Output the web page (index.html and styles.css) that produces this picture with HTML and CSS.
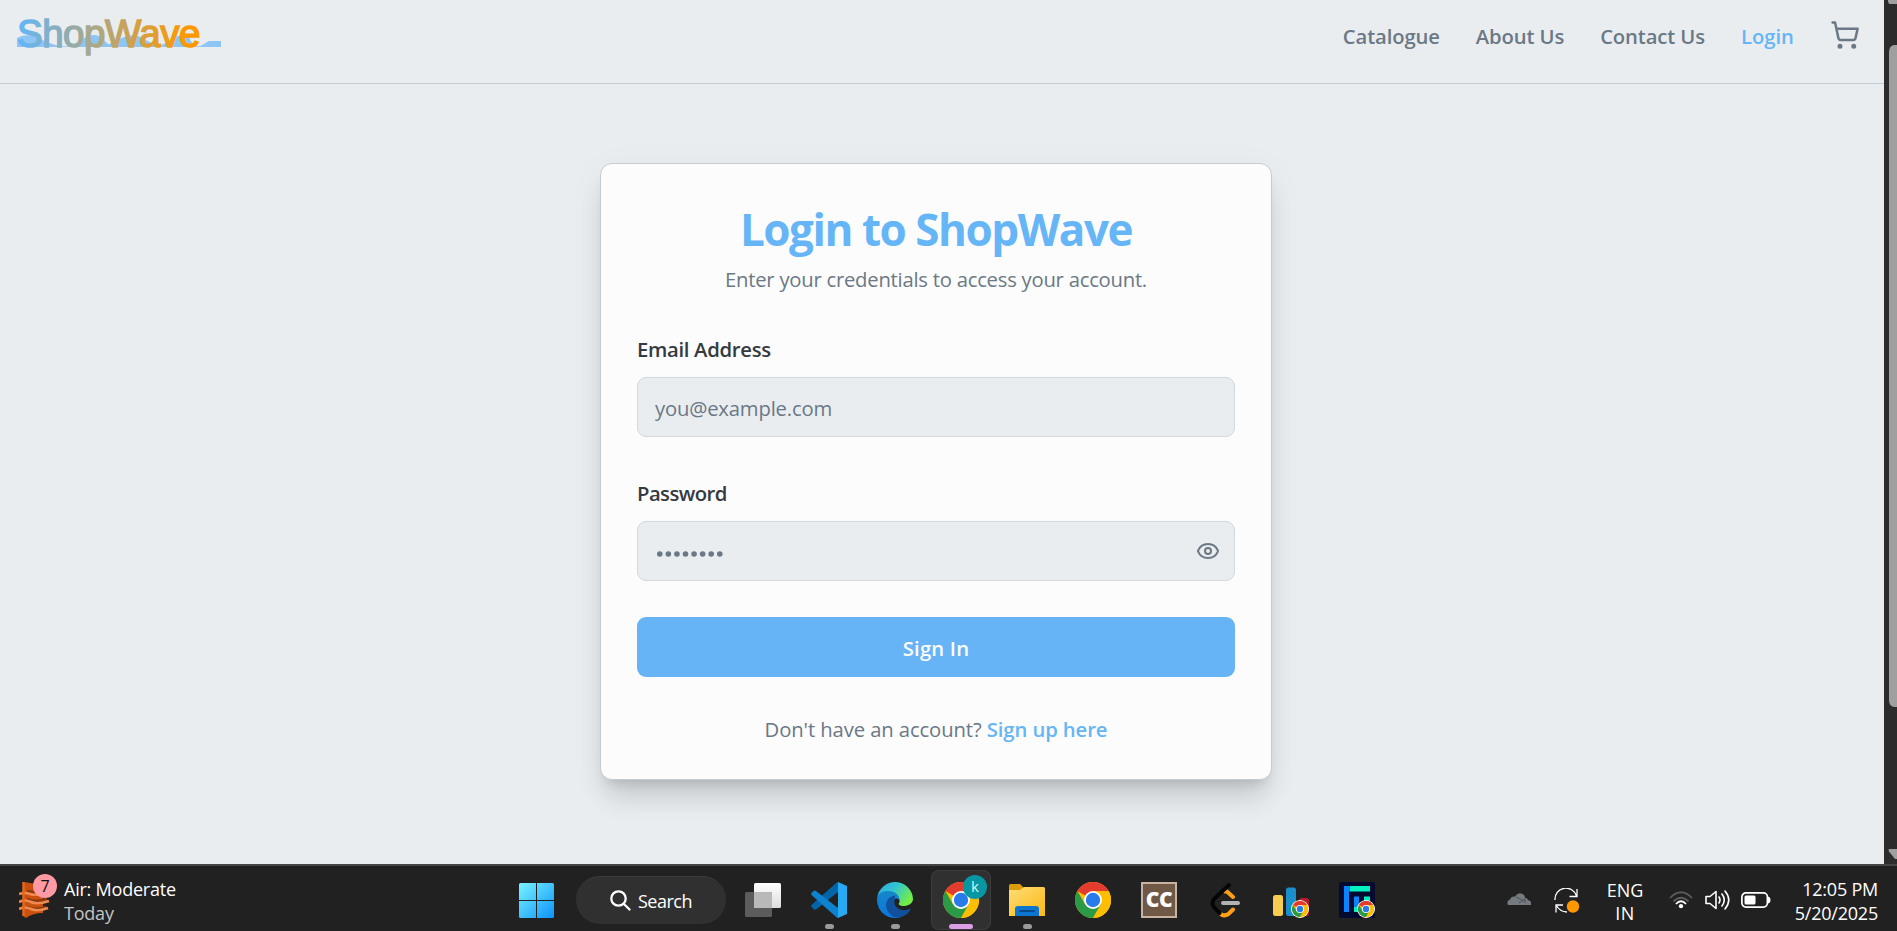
FILE: index.html
```html
<!DOCTYPE html>
<html lang="en">
<head>
<meta charset="utf-8">
<title>ShopWave - Login</title>
<link rel="stylesheet" href="styles.css">
</head>
<body>
<svg width="0" height="0" class="defs" aria-hidden="true">
  <defs>
    <linearGradient id="winG" x1="0" y1="0" x2="1" y2="1"><stop offset="0" stop-color="#7af3ff"/><stop offset="1" stop-color="#0c93fb"/></linearGradient>
    <symbol id="chrome" viewBox="0 0 48 48">
      <circle cx="24" cy="24" r="24" fill="#fdbd00"/>
      <path d="M24 24 3.2 12A24 24 0 0 1 44.8 12H24z" fill="#e33b2e"/>
      <path d="M3.2 12A24 24 0 0 0 24 48l10.4-18L24 24 13.6 30z" fill="#2a9a47"/>
      <path d="M44.8 12A24 24 0 0 1 24 48l10.4-18L36 20 24 12z" fill="#fdbd00"/>
      <circle cx="24" cy="24" r="12" fill="#fff"/>
      <circle cx="24" cy="24" r="9.6" fill="#2a7bea"/>
    </symbol>
  </defs>
</svg>

<div class="viewport">
  <div class="page">
    <header class="header">
      <svg class="logo" width="210" height="60" viewBox="0 0 210 60">
        <defs><linearGradient id="logoG" gradientUnits="userSpaceOnUse" x1="4" y1="0" x2="170" y2="0"><stop offset="0" stop-color="#64b5f6"/><stop offset="1" stop-color="#ff9800"/></linearGradient></defs>
        <path d="M2 47V38C10 34 18 35 24 38Q31 43 46 46.300H60C66 44 68 35 78 35S88 41 94 44.500Q98 46 103 46.300H90C100 42 108 36 116 35.500C128 35 130 42 145 46.300H143C152 44 158 36 168 35C178 35 172 42 182 46.300H185L194 41H206V47Z" fill="#8dc5f5"/>
        <text x="2" y="47.200" class="logo-text">ShopWave</text>
      </svg>
      <nav class="nav">
        <a>Catalogue</a><a>About Us</a><a>Contact Us</a><a class="active">Login</a>
        <svg class="cart" width="30" height="30" viewBox="0 0 24 24"><circle cx="8" cy="21" r="1"/><circle cx="19" cy="21" r="1"/><path d="M2.050 2.050h2l2.660 12.420a2 2 0 0 0 2 1.580h9.780a2 2 0 0 0 1.950-1.570l1.650-7.430H5.120"/></svg>
      </nav>
    </header>
    <main class="main">
      <form class="card">
        <h1 class="title">Login to ShopWave</h1>
        <p class="subtitle">Enter your credentials to access your account.</p>
        <label class="label">Email Address</label>
        <div class="field"><span class="placeholder">you@example.com</span></div>
        <label class="label label-pw">Password</label>
        <div class="field">
          <svg class="dots" width="69" height="8" viewBox="0 0 69 8"><path d="M4.800 4H67" /></svg>
          <svg class="eye" width="24" height="24" viewBox="0 0 24 24"><path d="M2.062 12.348a1 1 0 0 1 0-.696 10.750 10.750 0 0 1 19.876 0 1 1 0 0 1 0 .696 10.750 10.750 0 0 1-19.876 0"/><circle cx="12" cy="12" r="3"/></svg>
        </div>
        <button class="submit" type="button">Sign In</button>
        <p class="signup"><span>Don't have an account?</span> <a>Sign up here</a></p>
      </form>
    </main>
  </div>
  <div class="scrollbar">
    <svg width="13" height="864" viewBox="0 0 13 864"><path d="M4 0H13V4H6Q4 4 4 0Z" fill="#9f9f9f"/><path d="M13 45H10Q5 46 5 52V700Q5 706 10 707H13Z" fill="#9f9f9f"/><path d="M5 849H13V859H11L5 851.500Q4 850 5 849Z" fill="#9f9f9f"/></svg>
  </div>
</div>

<footer class="taskbar">
  <div class="weather">
    <div class="weather-icon">
      <svg width="36" height="40" viewBox="0 0 36 40"><path d="M5 3Q14 5 24 5V34Q14 34 7 39L4 37Z" fill="#c9500f"/><path d="M8 12Q17 15 28 12M8 20Q17 24 28 20M8 28Q17 32 27 28" stroke="#8c3a0c" stroke-width="3" fill="none"/><path d="M0 15Q6 13 11 15T29 14M0 23Q6 20 12 23T30 22M0 30Q6 27 12 30T29 29" stroke="#f08a50" stroke-width="2.600" fill="none"/><path d="M4.500 3V37" stroke="#e0671c" stroke-width="2.500"/></svg>
      <span class="count">7</span>
    </div>
    <div class="weather-text"><span>Air: Moderate</span><span class="dim">Today</span></div>
  </div>

  <div class="apps">
    <svg class="win" width="35" height="35" viewBox="0 0 35 35"><path d="M1.500 0H17V17H0V1.500Q0 0 1.500 0ZM18 0H33.500Q35 0 35 1.500V17H18ZM0 18H17V35H1.500Q0 35 0 33.500ZM18 18H35V33.500Q35 35 33.500 35H18Z" fill="url(#winG)"/></svg>
    <div class="search"><svg width="21" height="21" viewBox="0 0 21 21"><circle cx="8.500" cy="8.500" r="7.200"/><path d="M13.700 13.700 19.500 19.500"/></svg><span>Search</span></div>
    <svg class="tasks" width="36" height="34" viewBox="0 0 36 34"><defs><linearGradient id="tv" x1="0" y1="0" x2="0" y2="1"><stop offset="0" stop-color="#fff"/><stop offset="1" stop-color="#dcdcdc"/></linearGradient></defs><rect x="9" width="27" height="25" rx="1.500" fill="url(#tv)"/><rect y="9" width="27" height="25" rx="1.500" fill="#5c5c5c"/><path d="M9 9H25.500Q27 9 27 10.500V25H9Z" fill="#b9b9b9"/></svg>
    <div class="app">
      <svg width="36" height="36" viewBox="0 0 36 36"><path d="M27 0V10L5 27.500Q3.500 28 2.500 27L.5 25Q-.5 24 .8 22.800L26 .3Z" fill="#0065a9"/><path d="M27 36V26L5 9Q3.500 8 2.500 9L.5 11Q-.3 12 .8 13.200L26 35.700Z" fill="#0d83cf"/><path d="M27 0 36 4V32L27 36Z" fill="#27a9f3"/></svg>
      <b class="run"></b>
    </div>
    <div class="app">
      <svg width="36" height="36" viewBox="0 0 36 36"><defs><linearGradient id="ed1" x1="0" y1="0" x2="1" y2=".5"><stop offset="0" stop-color="#2aa5e5"/><stop offset=".5" stop-color="#34c6d2"/><stop offset="1" stop-color="#72ed45"/></linearGradient><linearGradient id="ed2" x1="0" y1="0" x2="0" y2="1"><stop offset="0" stop-color="#1588c9"/><stop offset="1" stop-color="#0b75dd"/></linearGradient></defs><path d="M.3 15A18 18 0 0 1 36 17C36 24 24 26 21.500 22C24 19 22 15 18 13Q7 7 .3 15Z" fill="url(#ed1)"/><path d="M0 18C0 11 6 8.500 12 9C18 9 22.500 13 22.500 18C19 14 15 18 16 24Q18 34 24 35A18 18 0 0 1 0 18Z" fill="url(#ed2)"/><path d="M18 13.500C7 15 6 28 16 34.500C23 37.500 31 33 33.500 27.500Q34 26 32.500 27C24 31 15 25 18 17Z" fill="#11509c"/></svg>
      <b class="run"></b>
    </div>
    <div class="app app-active">
      <svg width="36" height="36"><use href="#chrome"/></svg>
      <span class="profile">k</span>
      <b class="run run-active"></b>
    </div>
    <div class="app">
      <svg width="36" height="36" viewBox="0 0 36 36"><defs><linearGradient id="fo" x1="0" y1="0" x2="1" y2="1"><stop offset="0" stop-color="#ffdc78"/><stop offset="1" stop-color="#fcb912"/></linearGradient></defs><path d="M0 3.500Q0 2 1.500 2H11L15 6H24V10H0Z" fill="#dc9b08"/><path d="M0 8H11L15 5H34.500Q36 5 36 6.500V34H0Z" fill="url(#fo)"/><path d="M6 34V27Q6 24 9 24H27Q30 24 30 27V34Z" fill="#0c75cf"/><path d="M11 29H25" stroke="#08488c" stroke-width="2" stroke-linecap="round"/></svg>
      <b class="run"></b>
    </div>
    <div class="app"><svg width="36" height="36"><use href="#chrome"/></svg></div>
    <div class="app"><div class="cc">CC</div></div>
    <div class="app">
      <svg width="36" height="36" viewBox="0 0 36 36"><g fill="none" stroke-width="4" stroke-linecap="round" transform="translate(1.500 0)"><path d="M16.500 9.500Q18 9 19 10L24.500 15M24.500 27.500 20 32Q16 34.500 13 32.500" stroke="#ffa116"/><path d="M20.500 3 5.500 17Q2.500 21 5.500 25L11 31" stroke="#050505"/><path d="M14.500 21H29.500" stroke="#b3b3b3"/></g></svg>
    </div>
    <div class="app">
      <svg width="36" height="36" viewBox="0 0 36 36"><rect y="13" width="10" height="21" rx="2.500" fill="#f6cd4e"/><rect x="13" y="5.500" width="10" height="28.500" rx="2.500" fill="#1b8fcc"/><rect x="26" y="16" width="10" height="18" rx="2.500" fill="#b51c2b"/><circle cx="27" cy="27" r="9" fill="#fff"/><use href="#chrome" x="19" y="19" width="16" height="16"/></svg>
    </div>
    <div class="app">
      <svg width="36" height="36" viewBox="0 0 36 36"><rect width="36" height="36" rx="2" fill="#050a30"/><path d="M5 4H10V30H5ZM15 14.500H20V30H15Z" fill="#0a84ff"/><path d="M10.500 4H31V9.500H10.500ZM25 14.500H31V20H25ZM15 25H20V30H15Z" fill="#00f0c0"/><circle cx="27" cy="27" r="9" fill="#fff"/><use href="#chrome" x="19" y="19" width="16" height="16"/></svg>
    </div>
  </div>

  <div class="tray">
    <svg class="cloud" width="24" height="12" viewBox="0 0 24 12"><path d="M1 12Q-1 8 3 6.500Q4 3 8 3.500Q12-2 17 2Q18 3 18 5Q20 4.500 21 7Q25 8 24 12Z" fill="#747a7f"/><path d="M9 4 17 8M12 10 18 6V10" stroke="#4c5154" fill="none"/></svg>
    <svg class="sync" width="26" height="26" viewBox="0 0 26 26"><g fill="none" stroke="#fff" stroke-width="1.300"><path d="M1 12A11 11 0 0 1 22.500 8M23 1V8.500H15.500M2 24.500V17H9M2 17Q6 24 13 24"/></g><circle cx="19" cy="18.500" r="6.200" fill="#ff9800"/></svg>
    <div class="lang"><span>ENG</span><span class="in">IN</span></div>
    <svg class="wifi" width="24" height="18" viewBox="0 0 24 18"><g fill="none" stroke-width="1.800"><path d="M1 7Q12-4.500 23 7M4.500 10.500Q12 3 19.500 10.500" stroke="#5c5c5c"/><path d="M7 13Q12 7.500 17 13" stroke="#fff"/></g><circle cx="12" cy="15.200" r="2.100" fill="#fff"/></svg>
    <svg class="volume" width="25" height="22" viewBox="0 0 25 22"><g fill="none" stroke="#fff" stroke-width="1.600" stroke-linejoin="round" stroke-linecap="round"><path d="M1 7.500H5L11 2.500V19.500L5 14.500H1ZM14 8Q16 11 14 14M17 5Q21.500 11 17 17M20 2Q27.500 11 20 20"/></g></svg>
    <svg class="battery" width="30" height="16" viewBox="0 0 30 16"><rect x=".9" y=".9" width="25.500" height="14.200" rx="4" fill="none" stroke="#fff" stroke-width="1.700"/><rect x="3.500" y="3.500" width="11" height="9" rx="1.500" fill="#fff"/><path d="M27 4.500Q29.500 5 29.500 8T27 11.500Z" fill="#fff"/></svg>
    <div class="clock"><span>12:05 PM</span><span>5/20/2025</span></div>
  </div>
</footer>
</body>
</html>
```

FILE: styles.css
```css
* { box-sizing: border-box; margin: 0; padding: 0; }
body {
  display: flex;
  flex-direction: column;
  width: 1897px;
  height: 931px;
  overflow: hidden;
  background: #e9edf0;
  font-family: "Open Sans", "Noto Sans", sans-serif;
  font-size: 20.25px;
  line-height: 27px;
  white-space: nowrap;
}
svg { display: block; flex: none; }
.defs { position: absolute; }

.viewport { display: flex; height: 864px; }
.page { width: 1884px; background: #e9edf0; }
.scrollbar { width: 13px; background: #2c2c2c; }

.header {
  display: flex;
  justify-content: space-between;
  height: 84px;
  padding: 0 24px 0 15px;
  border-bottom: 1px solid #c3cbd2;
}
.logo-text {
  font-family: "Liberation Sans", Arial, sans-serif;
  font-size: 38.5px;
  letter-spacing: -0.5px;
  fill: url(#logoG);
  stroke: url(#logoG);
  stroke-width: 1.5px;
}
.nav {
  display: flex;
  align-items: center;
  gap: 36px;
  height: 72px;
  color: #6b7885;
  font-weight: 600;
  letter-spacing: -0.13px;
}
.nav .active { color: #66b5f6; letter-spacing: 0; }
.cart { margin: -2px 0 0; fill: none; stroke: #6b7885; stroke-width: 2; stroke-linecap: round; stroke-linejoin: round; }

.main { display: flex; justify-content: center; padding: 79px 12px 0 0; }
.card {
  width: 672px;
  height: 617px;
  padding: 36px 36px 36px 36px;
  background: #fcfcfc;
  border: 1px solid #c4ccd3;
  border-radius: 12px;
  box-shadow: 0 23px 28px -6px rgba(0, 0, 0, .12), 0 9px 12px -6px rgba(0, 0, 0, .12), 0 8px 36px rgba(0, 0, 0, .05);
}
.title {
  padding-top: 1px;
  color: #66b5f6;
  font-size: 44px;
  line-height: 56px;
  letter-spacing: -1.45px;
  text-align: center;
}
.subtitle { margin: 9px 0 43px; color: #6b7885; letter-spacing: -0.24px; text-align: center; }
.label { display: block; color: #343a40; font-weight: 600; letter-spacing: -0.3px; }
.label-pw { margin-top: 43px; letter-spacing: -0.55px; }
.field {
  display: flex;
  align-items: center;
  justify-content: space-between;
  height: 60px;
  margin-top: 14px;
  padding: 0 14px 0 17px;
  background: #e9edf0;
  border: 1px solid #d2d8de;
  border-radius: 9px;
}
.placeholder { padding-top: 2px; color: #6b7885; letter-spacing: -0.18px; }
.dots { margin-top: 5px; fill: none; stroke: #6b7885; stroke-width: 5.600; stroke-linecap: round; stroke-dasharray: 0 8.570; }
.eye { fill: none; stroke: #6b7885; stroke-width: 2; stroke-linecap: round; stroke-linejoin: round; }
.submit {
  display: block;
  width: 100%;
  height: 60px;
  margin-top: 36px;
  padding-top: 2px;
  border: 0;
  border-radius: 9px;
  background: #66b4f5;
  color: #fcfcfc;
  font: 600 20.25px/27px "Open Sans", "Noto Sans", sans-serif;
  letter-spacing: .2px;
}
.signup { margin-top: 39px; color: #6b7885; letter-spacing: -0.1px; text-align: center; }
.signup a { color: #66b5f6; font-weight: 600; }

.taskbar {
  display: grid;
  grid-template-columns: 519px 1fr auto;
  height: 67px;
  padding-right: 19px;
  border-top: 2px solid #444;
  background: #212122;
  color: #fff;
  font-size: 18px;
  line-height: 24px;
}
.weather { display: flex; padding: 11px 0 0 19px; letter-spacing: -0.22px; }
.weather-icon { position: relative; width: 45px; padding-top: 2px; }
.count {
  position: absolute;
  left: 14px;
  top: -3px;
  width: 24px;
  height: 24px;
  border-radius: 50%;
  background: #ff99a4;
  color: #111;
  font-size: 16px;
  text-align: center;
}
.weather-text, .lang, .clock { display: flex; flex-direction: column; }
.dim { color: #c4c4c4; }

.apps { display: flex; }
.win { margin-top: 17px; }
.search {
  display: flex;
  align-items: center;
  gap: 7px;
  width: 150px;
  height: 48px;
  margin: 10px 19px 0 22px;
  padding-left: 34px;
  border-radius: 24px;
  border-top: 1px solid #3d3d3e;
  background: #303031;
  letter-spacing: -0.5px;
}
.search svg { fill: none; stroke: #fff; stroke-width: 2.300; stroke-linecap: round; }
.tasks { margin: 17px 15px 0 0; }
.app {
  position: relative;
  display: flex;
  justify-content: center;
  width: 60px;
  height: 60px;
  margin: 4px 3px 0;
  padding-top: 12px;
  border-radius: 8px;
}
.app-active { background: #303031; box-shadow: inset 0 0 0 1px #3d3d3e; }
.run { position: absolute; bottom: 1px; left: 26px; width: 9px; height: 5px; border-radius: 3px; background: #9a9a9a; }
.run-active { left: 18px; width: 24px; background: #dc9ee4; }
.profile {
  position: absolute;
  left: 32px;
  top: 5px;
  width: 24px;
  height: 24px;
  border-radius: 50%;
  background: #0797a3;
  color: #d9f3f4;
  font-size: 15px;
  line-height: 23px;
  text-align: center;
}
.cc {
  width: 36px;
  height: 36px;
  border: 2px solid #c9b3a0;
  background: #6f5846;
  font: 800 21px/31px "Open Sans", sans-serif;
  letter-spacing: -0.5px;
  text-align: center;
}

.tray { display: flex; }
.cloud { margin-top: 27px; }
.sync { margin: 22px 0 0 23px; }
.lang { width: 46px; margin: 13px 0 0 22px; align-items: center; line-height: 23px; }
.in { letter-spacing: .5px; }
.wifi { margin: 25px 0 0 21px; }
.volume { margin: 23px 0 0 12px; }
.battery { margin: 26px 0 0 11px; }
.clock { width: 107px; padding-top: 11px; align-items: flex-end; letter-spacing: -0.22px; }
```
